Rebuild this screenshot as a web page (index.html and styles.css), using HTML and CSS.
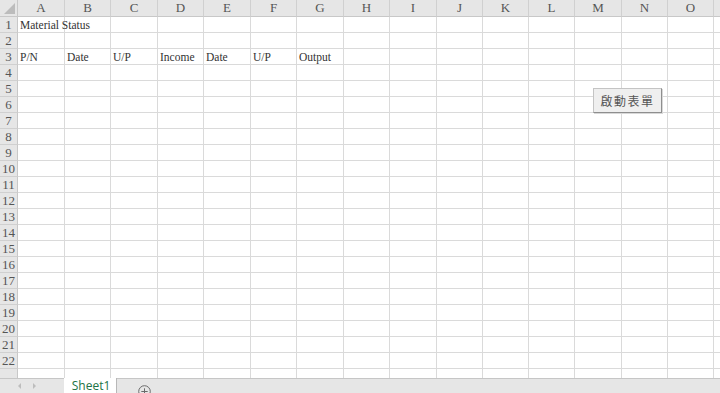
FILE: index.html
```html
<!DOCTYPE html>
<html lang="zh-Hant">
<head>
  <meta charset="UTF-8">
  <title>Material Status</title>
  <link rel="stylesheet" href="styles.css">
</head>
<body>
  <div class="app">
    <div class="sheet">
      <div class="grid" id="grid"></div>
      <button class="form-btn">啟動表單</button>
    </div>
    <div class="tabs">
      <div class="nav">
        <span class="arrow left"></span>
        <span class="arrow right"></span>
      </div>
      <div class="tab active">Sheet1</div>
      <div class="add">
        <svg width="13" height="13" viewBox="0 0 13 13">
          <circle cx="6.5" cy="6.5" r="5.8" fill="none" stroke="#6a6a6a" stroke-width="1"/>
          <path d="M6.5 3.3v6.4M3.3 6.5h6.4" stroke="#6a6a6a" stroke-width="1"/>
        </svg>
      </div>
    </div>
  </div>

  <script>
    const cols = ['A','B','C','D','E','F','G','H','I','J','K','L','M','N','O',''];
    const data = {
      '1A': 'Material Status',
      '3A': 'P/N', '3B': 'Date', '3C': 'U/P', '3D': 'Income',
      '3E': 'Date', '3F': 'U/P', '3G': 'Output'
    };
    const grid = document.getElementById('grid');

    let html = '<div class="corner"></div>';
    cols.forEach(c => { html += `<div class="col-head">${c}</div>`; });
    for (let r = 1; r <= 23; r++) {
      html += `<div class="row-head">${r < 23 ? r : ''}</div>`;
      cols.forEach(c => {
        const text = data[r + c] || '';
        html += `<div class="cell">${text}</div>`;
      });
    }
    grid.innerHTML = html;
  </script>
</body>
</html>
```

FILE: styles.css
```css
body {
  margin: 0;
  font-family: "Liberation Serif", "Noto Sans CJK TC", serif;
  background: #ffffff;
}
.app {
  width: 720px;
  height: 393px;
  display: flex;
  flex-direction: column;
  overflow: hidden;
}
.sheet {
  flex: 1;
  position: relative;
  overflow: hidden;
}
.grid {
  display: grid;
  grid-template-columns: 18px 47px 46px 47px 46px 47px 46px 47px 46px 47px 46px 46px 46px 47px 46px 46px 46px;
  grid-template-rows: 17px;
  grid-auto-rows: 16px;
  width: 766px;
}
.grid > div {
  box-sizing: border-box;
  overflow: visible;
  white-space: nowrap;
}
.corner {
  background: #e6e6e6;
  border-right: 1px solid #c8c8c8;
  border-bottom: 1px solid #c8c8c8;
  position: relative;
}
.corner::after {
  content: "";
  position: absolute;
  right: 2px;
  bottom: 2px;
  width: 0;
  height: 0;
  border-left: 11px solid transparent;
  border-bottom: 11px solid #bcbcbc;
}
.col-head {
  background: #e6e6e6;
  border-right: 1px solid #d0d0d0;
  border-bottom: 1px solid #c8c8c8;
  color: #555;
  font-size: 13px;
  line-height: 16px;
  text-align: center;
}
.row-head {
  background: #e6e6e6;
  border-right: 1px solid #c8c8c8;
  border-bottom: 1px solid #d0d0d0;
  color: #555;
  font-size: 13px;
  line-height: 16px;
  text-align: center;
}
.cell {
  border-right: 1px solid #dadada;
  border-bottom: 1px solid #dadada;
  color: #333;
  font-size: 11.5px;
  line-height: 16px;
  padding-left: 2px;
}
.form-btn {
  position: absolute;
  left: 593px;
  top: 88px;
  width: 69px;
  height: 25px;
  padding: 0;
  background: #efefef;
  border: 1px solid #c4c4c4;
  border-right-color: #8e8e8e;
  border-bottom-color: #8e8e8e;
  box-shadow: 1px 1px 0 #d8d8d8;
  color: #555;
  font-family: "Noto Sans CJK TC", sans-serif;
  font-size: 12px;
  letter-spacing: 1.5px;
}
.tabs {
  height: 15px;
  flex: none;
  display: flex;
  background: #e6e6e6;
  border-top: 1px solid #c6c6c6;
  box-sizing: border-box;
}
.nav {
  width: 64px;
  display: flex;
  align-items: center;
  gap: 12px;
  padding-left: 18px;
  box-sizing: border-box;
}
.arrow {
  width: 0;
  height: 0;
  border-top: 3px solid transparent;
  border-bottom: 3px solid transparent;
}
.arrow.left {
  border-right: 3px solid #bdbdbd;
}
.arrow.right {
  border-left: 3px solid #bdbdbd;
}
.tab {
  width: 53px;
  margin-top: -1px;
  background: #ffffff;
  border-right: 1px solid #b8b8b8;
  color: #217346;
  font-family: "Open Sans", sans-serif;
  font-size: 12px;
  line-height: 16px;
  padding-left: 2px;
  text-align: center;
  box-sizing: border-box;
}
.add {
  padding-left: 21px;
  display: flex;
  align-items: flex-end;
  height: 14px;
  overflow: hidden;
}
.add svg {
  margin-bottom: -5px;
}
```
